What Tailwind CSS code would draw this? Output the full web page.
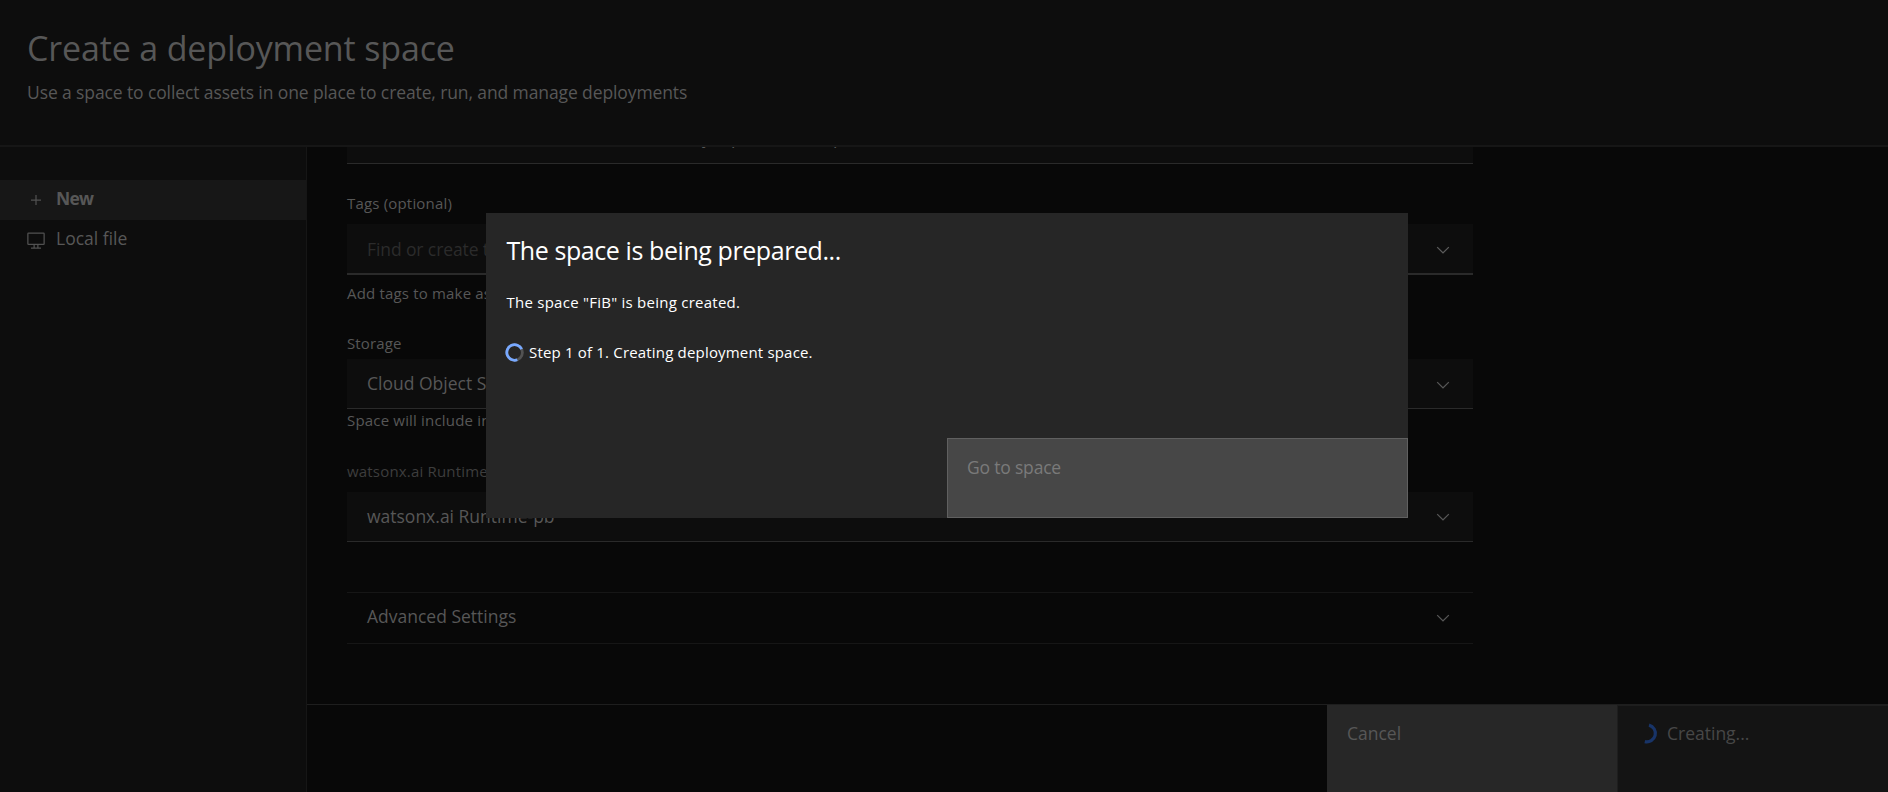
<!DOCTYPE html>
<html lang="en">
<head>
<meta charset="utf-8">
<title>Create a deployment space</title>
<script src="https://cdn.jsdelivr.net/npm/@tailwindcss/browser@4"></script>
</head>
<body class="relative flex h-[792px] w-[1888px] flex-col overflow-hidden bg-[#080808] font-['Open_Sans','Noto_Sans',sans-serif] text-[17.5px] text-[#575757]">
<header class="h-[147px] shrink-0 border-b-2 border-[#161616] bg-[#0d0d0d] pt-[26px] pl-[27px]">
  <h1 class="text-[34px] leading-[44px] tracking-[-0.15px]">Create a deployment space</h1>
  <p class="mt-[11px] leading-[22px] tracking-[-0.11px]">Use a space to collect assets in one place to create, run, and manage deployments</p>
</header>
<div class="flex min-h-0 grow">
  <nav class="w-[307px] shrink-0 border-r border-[#161616] bg-[#0d0d0d] pt-[33px]">
    <div class="flex h-10 items-center bg-[#171717] pl-[26px]">
      <svg class="size-5 text-[#515151]" viewBox="0 0 32 32" fill="currentColor"><path d="M17 15V8h-2v7H8v2h7v7h2v-7h7v-2z"/></svg>
      <span class="pb-[3px] pl-[10px] font-bold tracking-[-0.8px]">New</span>
    </div>
    <div class="flex h-10 items-center pl-[26px]">
      <svg class="size-5 text-[#515151]" viewBox="0 0 32 32" fill="currentColor"><path d="M28 4H4a2 2 0 0 0-2 2v16a2 2 0 0 0 2 2h8v4H8v2h16v-2h-4v-4h8a2 2 0 0 0 2-2V6a2 2 0 0 0-2-2ZM18 28h-4v-4h4Zm10-6H4V6h24Z"/></svg>
      <span class="pb-[3px] pl-[10px]">Local file</span>
    </div>
  </nav>
  <div class="flex min-w-0 grow flex-col">
    <main class="min-h-0 grow overflow-hidden pl-10">
      <div class="w-[1126px]">
        <div class="h-[17px] overflow-hidden border-b border-[#2a2a2a] bg-[#0d0d0d]">
          <div class="-mt-[21px] flex pl-5 leading-[22px] whitespace-nowrap">
            <span class="w-[335px] text-right">Runtime environment for models used in</span><span class="w-[29px]">yre</span><span class="w-[102px]">port monitor</span><span>pb</span>
          </div>
        </div>
        <div class="mt-[29px] text-[15px] leading-5 tracking-[0.18px]">Tags (optional)</div>
        <div class="mt-[11px] flex h-[51px] items-center justify-between border-b-2 border-[#2a2a2a] bg-[#0d0d0d] px-5 text-[#2b2b2b]">
          <span class="pt-[2px] tracking-[-0.1px]">Find or create tags</span>
          <svg class="mt-[3px] size-5 text-[#5c5c5c]" viewBox="0 0 16 16" fill="currentColor"><path d="M8 11 3 6l.7-.7L8 9.6l4.3-4.3.7.7z"/></svg>
        </div>
        <div class="mt-2 text-[15px] leading-5 tracking-[0.18px]">Add tags to make assets easier to find.</div>
        <div class="mt-[30px] text-[15px] leading-5 tracking-[0.14px]">Storage</div>
        <div class="mt-1.5 flex h-[50px] items-center justify-between border-b border-[#2a2a2a] bg-[#0d0d0d] px-5">
          <span>Cloud Object Storage</span>
          <svg class="mt-[3px] size-5" viewBox="0 0 16 16" fill="currentColor"><path d="M8 11 3 6l.7-.7L8 9.6l4.3-4.3.7.7z"/></svg>
        </div>
        <div class="mt-px text-[15px] leading-5 tracking-[0.18px]">Space will include integration with Cloud Object Storage.</div>
        <div class="mt-[31px] text-[15px] leading-5 tracking-[0.18px] text-[#3d3d3d]">watsonx.ai Runtime (optional)</div>
        <div class="mt-[11px] flex h-[50px] items-center justify-between border-b border-[#2a2a2a] bg-[#0d0d0d] px-5">
          <span>watsonx.ai Runtime-pb</span>
          <svg class="size-5" viewBox="0 0 16 16" fill="currentColor"><path d="M8 11 3 6l.7-.7L8 9.6l4.3-4.3.7.7z"/></svg>
        </div>
        <div class="mt-[50px] flex h-[52px] items-center justify-between border-y border-[#161616] px-5">
          <span class="pb-[3px]">Advanced Settings</span>
          <svg class="size-5" viewBox="0 0 16 16" fill="currentColor"><path d="M8 11 3 6l.7-.7L8 9.6l4.3-4.3.7.7z"/></svg>
        </div>
      </div>
    </main>
    <footer class="flex h-[88px] shrink-0 justify-end border-t border-[#1e1e1e] leading-[22px]">
      <div class="w-[290px] bg-[#272727] pt-[17px] pl-5">Cancel</div>
      <div class="flex w-[271px] items-start border-t border-l border-[#1e1e1e] bg-[#141414] pl-[19px] text-[#474747]">
        <svg class="mt-[17px] h-[22px] w-[22px]" viewBox="0 0 22 22" fill="none" stroke="#183468" stroke-width="3.2"><path d="M12 2.1A8.2 8.2 0 0 1 7.8 18.6"/></svg>
        <span class="pt-4 pl-[8px]">Creating...</span>
      </div>
    </footer>
  </div>
</div>
<div class="absolute top-[213px] left-[486px] flex h-[305px] w-[922px] flex-col bg-[#262626] text-[15px] text-white" role="dialog">
  <h2 class="mt-[21px] pl-[20.5px] text-[25px] leading-8 tracking-[-0.42px]">The space is being prepared...</h2>
  <p class="mt-[26px] pl-[20.5px] leading-5 tracking-[0.25px]">The space "FiB" is being created.</p>
  <div class="mt-[29px] flex items-center pl-[19px] leading-5">
    <svg class="mt-[2px] size-5" viewBox="0 0 20 20" fill="none" stroke-width="2.8"><circle cx="9.6" cy="9.5" r="7.8" stroke="#525252"/><path stroke="#78a9ff" d="M12.3 16.8A7.8 7.8 0 1 1 16.7 6.2"/></svg>
    <span class="pl-1 tracking-[0.18px]">Step 1 of 1. Creating deployment space.</span>
  </div>
  <div class="mt-auto ml-auto h-20 w-[461px] border border-[#606060] bg-[#474747] pt-[17px] pl-[19px] text-[17.5px] leading-[22px] tracking-[-0.19px] text-[#7a7a7a]">Go to space</div>
</div>
</body>
</html>
